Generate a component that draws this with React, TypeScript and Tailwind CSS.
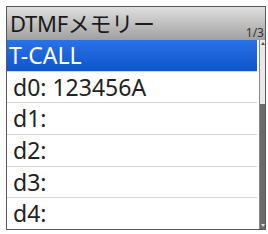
const rows = ["d0: 123456A", "d1:", "d2:", "d3:", "d4:"]

const font = { fontFamily: '"Noto Sans", "Noto Sans CJK JP", sans-serif' }

export default function App() {
  return (
    <div className="w-[268px] h-[234px] bg-white pt-[6px] pl-[6px]" style={font}>
      <div className="w-[260px] h-[224px] border border-[#5a5a5a] flex flex-col">
        {/* header */}
        <div className="h-[33px] shrink-0 flex items-end justify-between bg-gradient-to-b from-[#e0e0e0] to-[#a0a0a0] pl-[3px] pr-[1px]">
          <span className="text-[22px] leading-none text-[#1a1a1a] pb-[6px] tracking-[-0.3px]">DTMFメモリー</span>
          <span className="text-[12px] leading-none text-[#333] pb-[1px]">1/3</span>
        </div>
        {/* list + scrollbar */}
        <div className="flex flex-1 gap-[2px]">
          <div className="flex-1 flex flex-col">
            <div className="flex-1 flex items-center bg-gradient-to-b from-[#2a72e8] to-[#0d55cc] text-white text-[23px] leading-none pl-[2px]">
              T-CALL
            </div>
            {rows.map((r) => (
              <div
                key={r}
                className="flex-1 flex items-center border-t border-[#d6d6d6] text-[#222] text-[23px] leading-none pl-[6px]"
              >
                {r}
              </div>
            ))}
          </div>
          <div className="w-[6px] flex flex-col border-l border-[#888]">
            <div className="h-[64px] bg-[#e8e8e8] flex justify-center pt-[2px]">
              <div className="w-0 h-0 border-x-[2px] border-x-transparent border-b-[3px] border-b-[#555]" />
            </div>
            <div className="flex-1 bg-[#6a6a6a] flex items-end justify-center pb-[2px]">
              <div className="w-0 h-0 border-x-[2px] border-x-transparent border-t-[3px] border-t-[#ddd]" />
            </div>
          </div>
        </div>
      </div>
    </div>
  )
}
